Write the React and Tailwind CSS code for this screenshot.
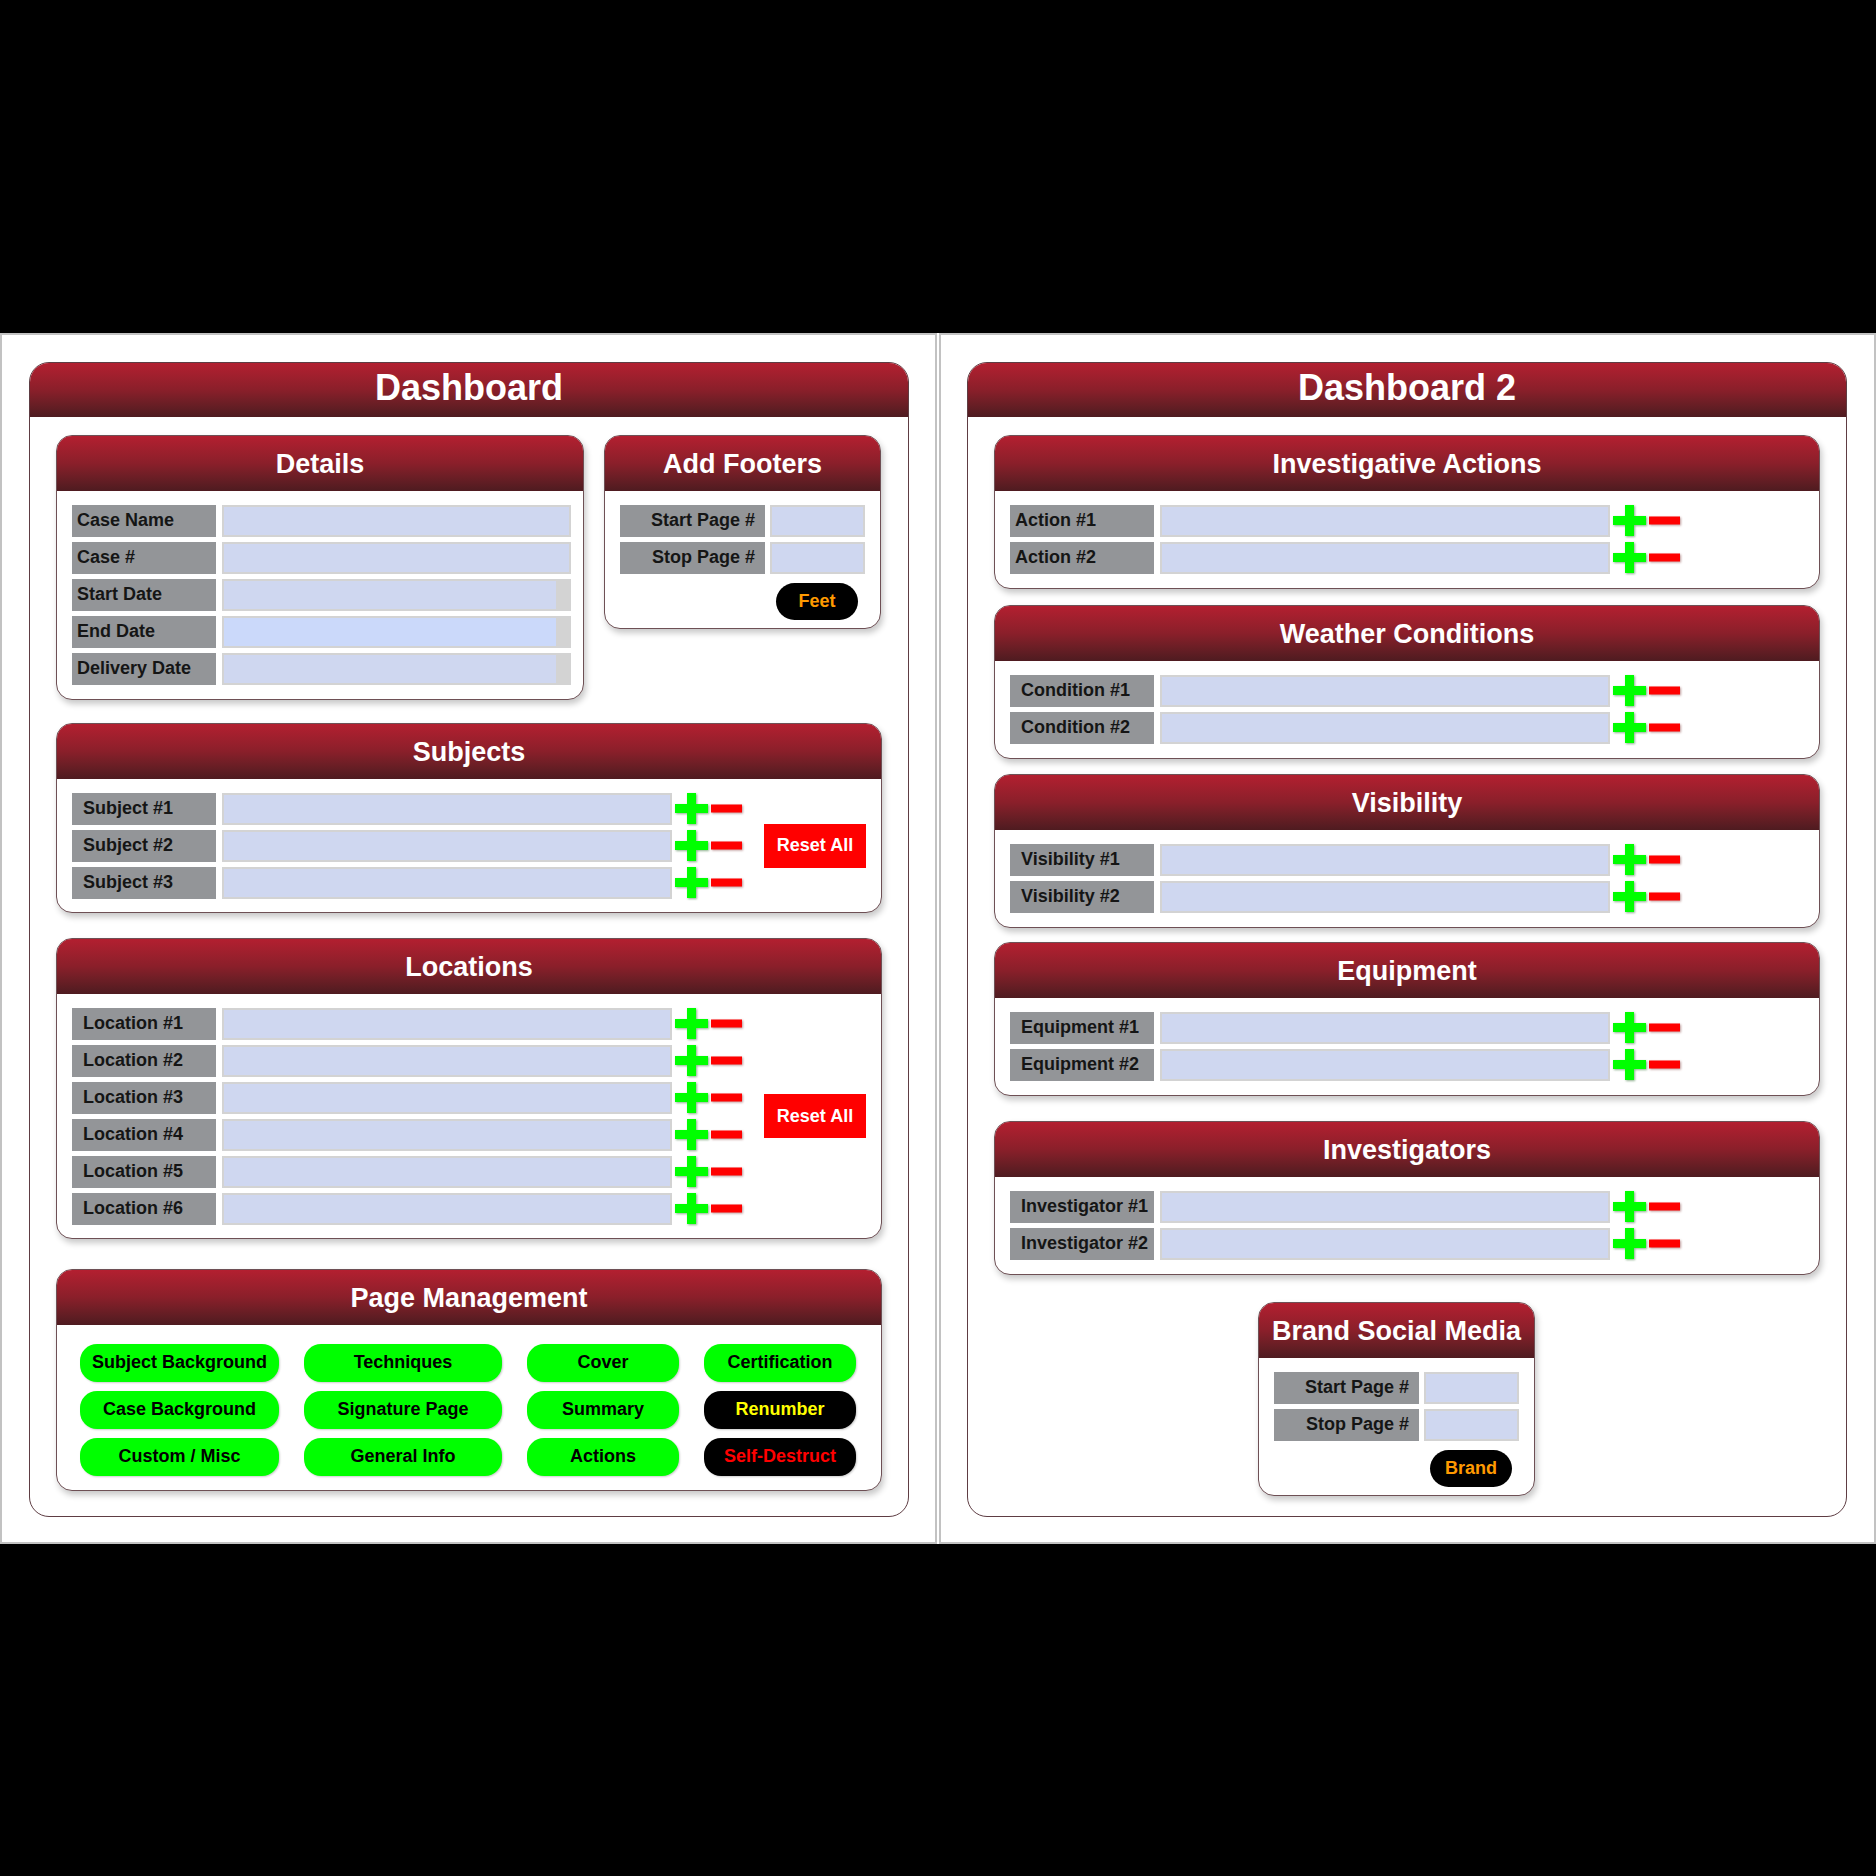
import React from 'react';

const headerBg = 'bg-linear-to-b from-[#b31f30] via-[#8a1f2a] to-[#4e1b20]';

const Plus = () => (
  <svg width="33" height="31" viewBox="0 0 33 31" className="drop-shadow-[1px_1px_1px_rgba(0,80,0,0.45)]">
    <rect x="0" y="11" width="33" height="9" fill="#00ff00" />
    <rect x="12" y="0" width="9" height="31" fill="#00ff00" />
  </svg>
);

const Minus = () => (
  <svg width="32" height="9" viewBox="0 0 32 9" className="drop-shadow-[1px_1px_1px_rgba(90,0,0,0.4)]">
    <rect x="0" y="0.5" width="31" height="8" fill="#ff0000" />
  </svg>
);

const Card = ({ title, className = '', children }) => (
  <div className={`rounded-[16px] border border-[#6e5055] bg-white overflow-hidden shadow-[2px_4px_6px_rgba(0,0,0,0.22)] ${className}`}>
    <div className={`h-[55px] pt-[3px] ${headerBg} flex items-center justify-center text-white font-bold text-[27px] whitespace-nowrap`}>
      {title}
    </div>
    {children}
  </div>
);

const Field = ({ date, focused, w = 'flex-1' }) => (
  <div className={`${w} h-full flex border-2 border-[#d3d3d3] ${focused ? 'bg-[#cbd9fa]' : 'bg-[#cfd7f0]'}`}>
    <div className="flex-1" />
    {date && <div className="w-[13px] bg-[#d3d3d3]" />}
  </div>
);

const Label = ({ text, pl = 'pl-[11px]', w = 'w-[144px]', right }) => (
  <div className={`${w} h-full shrink-0 bg-[#939598] flex items-center ${right ? 'justify-end pr-[10px]' : pl} font-bold text-[18px] text-[#151515] whitespace-nowrap`}>
    {text}
  </div>
);

const ListRow = ({ label, pl }) => (
  <div className="flex items-center h-[32px]">
    <Label text={label} pl={pl} />
    <div className="ml-[6px] w-[450px] h-full">
      <Field w="w-full" />
    </div>
    <div className="ml-[3px] flex items-center">
      <Plus />
    </div>
    <div className="ml-[3px] flex items-center">
      <Minus />
    </div>
  </div>
);

const ListCard = ({ title, labels, pl, reset, pb = 'pb-[13px]', className = '' }) => (
  <Card title={title} className={className}>
    <div className={`px-[15px] pt-[14px] ${pb} flex items-center`}>
      <div className="flex flex-col gap-[5px]">
        {labels.map((l) => (
          <ListRow key={l} label={l} pl={pl} />
        ))}
      </div>
      {reset && (
        <button className="ml-[21px] w-[102px] h-[44px] bg-[#ff0000] text-white font-bold text-[18px]">
          Reset All
        </button>
      )}
    </div>
  </Card>
);

const PageRange = ({ title, button, className = '' }) => (
  <Card title={title} className={className}>
    <div className="px-[15px] pt-[14px] pb-[8px] flex flex-col">
      <div className="flex flex-col gap-[5px]">
        {['Start Page #', 'Stop Page #'].map((l) => (
          <div key={l} className="flex h-[32px] gap-[5px]">
            <Label text={l} w="w-[145px]" right />
            <Field w="w-[95px]" />
          </div>
        ))}
      </div>
      <button className="self-end mr-[7px] mt-[9px] w-[82px] h-[37px] rounded-full bg-black text-[#ff9a00] font-bold text-[18px]">
        {button}
      </button>
    </div>
  </Card>
);

const pageButtons = [
  ['Subject Background', 'g'],
  ['Techniques', 'g'],
  ['Cover', 'g'],
  ['Certification', 'g'],
  ['Case Background', 'g'],
  ['Signature Page', 'g'],
  ['Summary', 'g'],
  ['Renumber', 'y'],
  ['Custom / Misc', 'g'],
  ['General Info', 'g'],
  ['Actions', 'g'],
  ['Self-Destruct', 'r'],
];

const btnStyle = {
  g: 'bg-[#00ff00] text-black',
  y: 'bg-black text-[#ffff00]',
  r: 'bg-black text-[#ff0000]',
};

const Dashboard = ({ title, children }) => (
  <div className="h-[1155px] rounded-[20px] border border-[#5e3d43] bg-white overflow-hidden">
    <div className={`h-[54px] pb-[4px] ${headerBg} flex items-center justify-center text-white font-bold text-[36px]`}>
      {title}
    </div>
    <div className="px-[26px]">{children}</div>
  </div>
);

export default function App() {
  return (
    <div className="w-full h-[1876px] bg-black flex items-center font-['Liberation_Sans',Arial,sans-serif]">
      <div className="w-full h-[1211px] flex gap-[2px] bg-white">
        {/* Left column */}
        <div className="flex-1 border-2 border-[#c2c2c2] pt-[27px] pl-[27px] pr-[26px]">
          <Dashboard title="Dashboard">
            <div className="mt-[18px] flex items-start gap-[20px]">
              <Card title="Details" className="w-[528px]">
                <div className="pl-[15px] pr-[12px] pt-[14px] pb-[14px] flex flex-col gap-[5px]">
                  {[
                    ['Case Name'],
                    ['Case #'],
                    ['Start Date', true],
                    ['End Date', true, true],
                    ['Delivery Date', true],
                  ].map(([l, d, f]) => (
                    <div key={l} className="flex h-[32px] gap-[6px]">
                      <Label text={l} pl="pl-[5px]" />
                      <Field date={d} focused={f} />
                    </div>
                  ))}
                </div>
              </Card>
              <PageRange title="Add Footers" button="Feet" className="w-[277px]" />
            </div>

            <ListCard
              title="Subjects"
              labels={['Subject #1', 'Subject #2', 'Subject #3']}
              reset
              className="mt-[23px]"
            />

            <ListCard
              title="Locations"
              labels={['Location #1', 'Location #2', 'Location #3', 'Location #4', 'Location #5', 'Location #6']}
              reset
              className="mt-[25px]"
            />

            <Card title="Page Management" className="mt-[30px]">
              <div className="px-[23px] pt-[19px] pb-[14px] grid grid-cols-[199px_198px_152px_152px] gap-x-[25px] gap-y-[9px]">
                {pageButtons.map(([t, c]) => (
                  <button
                    key={t}
                    className={`h-[38px] rounded-[17px] font-bold text-[18px] whitespace-nowrap shadow-[1px_1px_2px_rgba(0,0,0,0.2)] ${btnStyle[c]}`}
                  >
                    {t}
                  </button>
                ))}
              </div>
            </Card>
          </Dashboard>
        </div>

        {/* Right column */}
        <div className="flex-1 border-2 border-[#c2c2c2] pt-[27px] pl-[26px] pr-[27px]">
          <Dashboard title="Dashboard 2">
            <ListCard title="Investigative Actions" labels={['Action #1', 'Action #2']} pl="pl-[5px]" pb="pb-[14px]" className="mt-[18px]" />
            <ListCard title="Weather Conditions" labels={['Condition #1', 'Condition #2']} pb="pb-[14px]" className="mt-[16px]" />
            <ListCard title="Visibility" labels={['Visibility #1', 'Visibility #2']} pb="pb-[14px]" className="mt-[15px]" />
            <ListCard title="Equipment" labels={['Equipment #1', 'Equipment #2']} pb="pb-[14px]" className="mt-[14px]" />
            <ListCard title="Investigators" labels={['Investigator #1', 'Investigator #2']} pb="pb-[14px]" className="mt-[25px]" />
            <PageRange title="Brand Social Media" button="Brand" className="w-[277px] ml-[264px] mt-[27px]" />
          </Dashboard>
        </div>
      </div>
    </div>
  );
}
